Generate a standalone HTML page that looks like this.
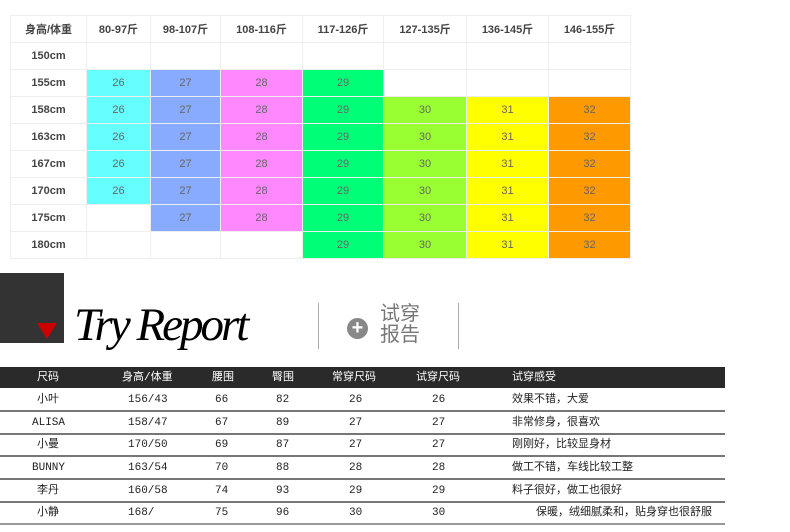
<!DOCTYPE html>
<html><head><meta charset="utf-8"><style>
body{margin:0;width:790px;height:532px;background:#fff;position:relative;overflow:hidden;font-family:"Liberation Sans","Noto Sans CJK SC",sans-serif}
table.s{position:absolute;left:10px;top:15px;border-collapse:collapse}
table.s td{height:26px;border:1px solid #eee;text-align:center;font-size:11px;color:#666;padding:0}
table.s tr:first-child td,table.s td:first-child{font-weight:bold;color:#444;font-size:11px}
.c{background:#66ffff}.b{background:#88aaff}.p{background:#ff88ff}.g{background:#00ff77}.l{background:#99ff33}.y{background:#ffff00}.o{background:#ff9900}
.r{position:absolute;left:0;width:725px;font-size:11px;line-height:14px;height:14px;color:#222;font-family:"Liberation Mono","Noto Sans CJK SC",monospace}
.r span{position:absolute;top:0;white-space:nowrap}
</style></head><body>
<table class="s">
<colgroup><col style="width:76px"><col style="width:64px"><col style="width:70px"><col style="width:82px"><col style="width:81px"><col style="width:83px"><col style="width:82px"><col style="width:82px"></colgroup>
<tr><td>身高/体重</td><td>80-97斤</td><td>98-107斤</td><td>108-116斤</td><td>117-126斤</td><td>127-135斤</td><td>136-145斤</td><td>146-155斤</td></tr>
<tr><td>150cm</td><td></td><td></td><td></td><td></td><td></td><td></td><td></td></tr>
<tr><td>155cm</td><td class="c">26</td><td class="b">27</td><td class="p">28</td><td class="g">29</td><td></td><td></td><td></td></tr>
<tr><td>158cm</td><td class="c">26</td><td class="b">27</td><td class="p">28</td><td class="g">29</td><td class="l">30</td><td class="y">31</td><td class="o">32</td></tr>
<tr><td>163cm</td><td class="c">26</td><td class="b">27</td><td class="p">28</td><td class="g">29</td><td class="l">30</td><td class="y">31</td><td class="o">32</td></tr>
<tr><td>167cm</td><td class="c">26</td><td class="b">27</td><td class="p">28</td><td class="g">29</td><td class="l">30</td><td class="y">31</td><td class="o">32</td></tr>
<tr><td>170cm</td><td class="c">26</td><td class="b">27</td><td class="p">28</td><td class="g">29</td><td class="l">30</td><td class="y">31</td><td class="o">32</td></tr>
<tr><td>175cm</td><td></td><td class="b">27</td><td class="p">28</td><td class="g">29</td><td class="l">30</td><td class="y">31</td><td class="o">32</td></tr>
<tr><td>180cm</td><td></td><td></td><td></td><td class="g">29</td><td class="l">30</td><td class="y">31</td><td class="o">32</td></tr>
</table>
<div style="position:absolute;left:0;top:273px;width:64px;height:70px;background:#333"></div>
<div style="position:absolute;left:37px;top:323px;width:0;height:0;border-left:10px solid transparent;border-right:10px solid transparent;border-top:16px solid #c00"></div>
<div style="position:absolute;left:74px;top:298px;font-family:'Liberation Serif',serif;font-style:italic;font-size:47px;letter-spacing:-3px;color:#000">Try Report</div>
<div style="position:absolute;left:318px;top:303px;width:1px;height:46px;background:#aaa"></div>
<div style="position:absolute;left:458px;top:303px;width:1px;height:46px;background:#aaa"></div>
<div style="position:absolute;left:347px;top:318px;width:21px;height:21px;border-radius:50%;background:#888;color:#fff;font-size:20px;line-height:20px;text-align:center;font-weight:bold">+</div>
<div style="position:absolute;left:380px;top:304px;font-size:20px;line-height:21px;color:#777">试穿<br>报告</div>
<div style="position:absolute;left:0;top:367px;width:725px;height:21px;background:#2a2a2a"></div>
<div class="r" style="top:371px;color:#fff"><span style="left:37px">尺码</span><span style="left:122px">身高/体重</span><span style="left:212px">腰围</span><span style="left:272px">臀围</span><span style="left:332px">常穿尺码</span><span style="left:416px">试穿尺码</span><span style="left:512px">试穿感受</span></div>
<div class="r" style="top:393px"><span style="left:37px">小叶</span><span style="left:128px">156/43</span><span style="left:215px">66</span><span style="left:276px">82</span><span style="left:349px">26</span><span style="left:432px">26</span><span style="left:512px">效果不错，大爱</span></div>
<div class="r" style="top:416px"><span style="left:32px">ALISA</span><span style="left:128px">158/47</span><span style="left:215px">67</span><span style="left:276px">89</span><span style="left:349px">27</span><span style="left:432px">27</span><span style="left:512px">非常修身，很喜欢</span></div>
<div class="r" style="top:438px"><span style="left:37px">小曼</span><span style="left:128px">170/50</span><span style="left:215px">69</span><span style="left:276px">87</span><span style="left:349px">27</span><span style="left:432px">27</span><span style="left:512px">刚刚好，比较显身材</span></div>
<div class="r" style="top:461px"><span style="left:32px">BUNNY</span><span style="left:128px">163/54</span><span style="left:215px">70</span><span style="left:276px">88</span><span style="left:349px">28</span><span style="left:432px">28</span><span style="left:512px">做工不错，车线比较工整</span></div>
<div class="r" style="top:484px"><span style="left:37px">李丹</span><span style="left:128px">160/58</span><span style="left:215px">74</span><span style="left:276px">93</span><span style="left:349px">29</span><span style="left:432px">29</span><span style="left:512px">料子很好，做工也很好</span></div>
<div class="r" style="top:506px"><span style="left:37px">小静</span><span style="left:128px">168/</span><span style="left:215px">75</span><span style="left:276px">96</span><span style="left:349px">30</span><span style="left:432px">30</span><span style="left:536px">保暖，绒细腻柔和，贴身穿也很舒服</span></div>
<div style="position:absolute;left:0;top:410px;width:725px;height:2px;background:#777"></div>
<div style="position:absolute;left:0;top:433px;width:725px;height:2px;background:#777"></div>
<div style="position:absolute;left:0;top:455px;width:725px;height:2px;background:#777"></div>
<div style="position:absolute;left:0;top:478px;width:725px;height:2px;background:#777"></div>
<div style="position:absolute;left:0;top:501px;width:725px;height:2px;background:#777"></div>
<div style="position:absolute;left:0;top:523px;width:725px;height:2px;background:#999"></div>
</body></html>
